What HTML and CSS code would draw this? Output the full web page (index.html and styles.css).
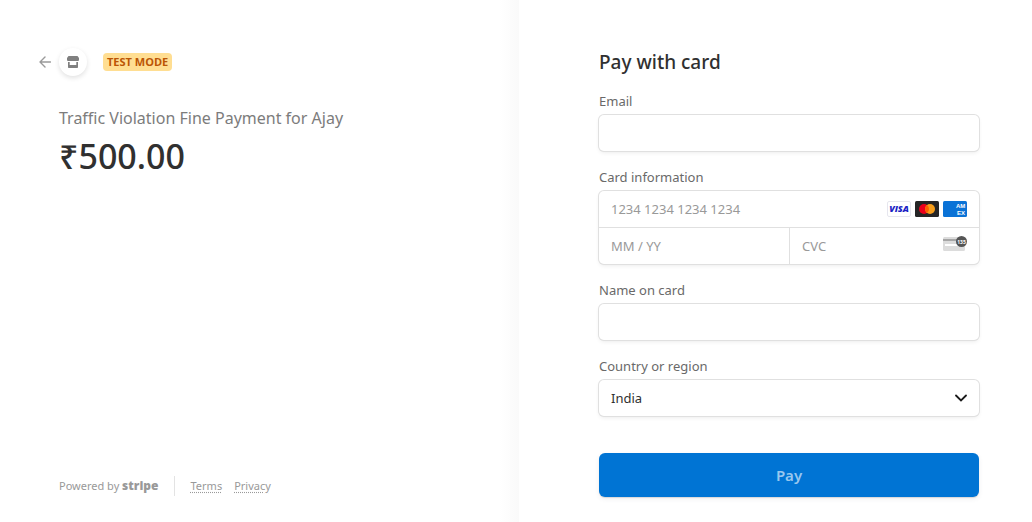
FILE: index.html
```html
<!DOCTYPE html>
<html lang="en">
<head>
<meta charset="utf-8">
<meta name="viewport" content="width=device-width, initial-scale=1">
<title>Checkout</title>
<link rel="stylesheet" href="styles.css">
</head>
<body>
<div class="checkout">
  <section class="overview">
    <header class="business">
      <a class="back" href="#" aria-label="Back">
        <svg class="back-arrow" viewBox="0 0 12 12" width="12" height="12"><path d="M11.5 6H1M6 1 1 6l5 5" fill="none" stroke="#9a9a9a" stroke-width="1.4" stroke-linecap="round" stroke-linejoin="round"/></svg>
        <span class="avatar">
          <svg viewBox="0 0 12 12" width="12" height="12" fill="#808080"><path d="M1.500 0h9L12 2v2c0 .6-.7 1-1.500 1H1.500C.7 5 0 4.600 0 4V2z"/><path d="M1 6h1.700v3h6.600V6H11v5c0 .6-.4 1-1 1H2c-.6 0-1-.4-1-1z"/></svg>
        </span>
      </a>
      <span class="badge">TEST MODE</span>
    </header>
    <div class="summary">
      <h1 class="product">Traffic Violation Fine Payment for Ajay</h1>
      <p class="amount">₹500.00</p>
    </div>
    <footer class="footer">
      <a class="powered" href="#">Powered by <b class="brand">stripe</b></a>
      <nav class="legal"><a href="#">Terms</a><a href="#">Privacy</a></nav>
    </footer>
  </section>
  <main class="payment">
    <form class="form">
      <h2 class="heading">Pay with card</h2>
      <div class="field">
        <label for="email">Email</label>
        <input class="box control" id="email" type="email">
      </div>
      <div class="field">
        <label for="number">Card information</label>
        <div class="box card">
          <div class="cell number">
            <input class="control" id="number" type="text" placeholder="1234 1234 1234 1234">
            <div class="brands">
              <svg viewBox="0 0 24 16" width="24" height="16" role="img" aria-label="Visa"><rect x=".5" y=".5" width="23" height="15" rx="1.500" fill="#fff" stroke="#e6e6ee"/><text class="visa" x="12" y="11" text-anchor="middle">VISA</text></svg>
              <svg viewBox="0 0 24 16" width="24" height="16" role="img" aria-label="Mastercard"><rect width="24" height="16" rx="1.500" fill="#252525"/><circle cx="9" cy="8" r="5" fill="#eb001b"/><circle cx="15" cy="8" r="5" fill="#f79e1b"/><path d="M12 4a5 5 0 0 1 0 8 5 5 0 0 1 0-8z" fill="#ff5f00"/></svg>
              <svg viewBox="0 0 24 16" width="24" height="16" role="img" aria-label="American Express"><rect width="24" height="16" rx="1.500" fill="#0a72d6"/><text class="amex" x="13" y="7">AM</text><text class="amex" x="14" y="14">EX</text></svg>
            </div>
          </div>
          <div class="cell"><input class="control" type="text" placeholder="MM / YY" aria-label="Expiration"></div>
          <div class="cell cvc">
            <input class="control" type="text" placeholder="CVC" aria-label="CVC">
            <svg viewBox="0 0 24 16" width="24" height="16" aria-hidden="true"><rect y="1" width="22" height="14" rx="1.500" fill="#dcdcdc"/><path d="M0 3h22v2H0z" fill="#a6a6a6"/><path d="M2 8h18v2H2z" fill="#fff"/><circle cx="18.500" cy="5.500" r="5.500" fill="#555"/><text class="digits" x="18.500" y="7.500" text-anchor="middle">135</text></svg>
          </div>
        </div>
      </div>
      <div class="field">
        <label for="name">Name on card</label>
        <input class="box control" id="name" type="text">
      </div>
      <div class="field">
        <label for="country">Country or region</label>
        <div class="box select">
          <select class="control" id="country"><option>India</option></select>
          <svg class="chevron" viewBox="0 0 12 12" width="12" height="12" aria-hidden="true"><path d="m1 3.500 5 5 5-5" fill="none" stroke="#1a1a1a" stroke-width="1.800" stroke-linecap="round"/></svg>
        </div>
      </div>
      <button class="pay" type="submit">Pay</button>
    </form>
  </main>
</div>
</body>
</html>
```
FILE: styles.css
```css
* { box-sizing: border-box; }
body { margin: 0; background: #fff; font-family: "Noto Sans", sans-serif; font-size: 13px; color: #303030; }
.checkout { display: grid; grid-template-columns: 519fr 513fr; min-height: 100vh; }
.overview { display: flex; flex-direction: column; padding: 48px 80px 26px 39px; background: linear-gradient(to left, #fafafa, #fff 20px); }
.business { display: flex; align-items: center; gap: 16px; }
.back { display: flex; align-items: center; gap: 8px; }
.avatar { display: grid; place-items: center; width: 28px; height: 28px; border-radius: 50%; background: #fff; box-shadow: 0 2px 5px rgba(0, 0, 0, .12); }
.badge { padding: 0 4px; border-radius: 4px; background: #ffde92; color: #bb5504; font: 700 11px/18px "Open Sans", sans-serif; }
.summary { padding: 30px 0 0 20px; }
.product { margin: 0; font-size: 16px; font-weight: 400; line-height: 24px; color: #7c7c7c; }
.amount { margin: 0; font-size: 34px; font-weight: 500; line-height: 52px; color: #303030; }
.footer { display: flex; align-items: center; margin-top: auto; padding-left: 20px; font-size: 11px; line-height: 20px; }
.footer a { color: #999; font-weight: 400; text-decoration: none; }
.brand { font: 800 12px/20px "Open Sans", sans-serif; }
.legal { display: flex; gap: 12px; margin-left: 15px; padding-left: 16px; border-left: 1px solid #e3e3e3; }
.footer .legal a { text-decoration: underline dotted; text-underline-offset: 2px; }
.payment { padding: 48px 53px 24px 80px; }
.form { display: flex; flex-direction: column; gap: 16px; }
.heading { margin: 0 0 -1px; font-size: 19px; font-weight: 500; line-height: 28px; }
.field { display: flex; flex-direction: column; gap: 4px; }
.field label { color: #696969; font-size: 13px; font-weight: 400; line-height: 20px; }
.box { border-radius: 5px; background: #fff; box-shadow: 0 0 0 1px #e0e0e0, 0 2px 4px rgba(0, 0, 0, .07), 0 1px 1px rgba(0, 0, 0, .05); }
.control { width: 100%; min-width: 0; height: 36px; padding: 0 12px; border: 0; background: transparent; font: 400 13px "Noto Sans", sans-serif; color: #303030; }
.box.control { background: #fff; }
.control::placeholder { color: #999; opacity: 1; }
.card { display: grid; grid-template-columns: 1fr 1fr; }
.cell { display: flex; align-items: center; }
.number { grid-column: 1 / -1; border-bottom: 1px solid #e0e0e0; }
.brands { display: flex; gap: 4px; margin-right: 12px; }
.cvc { border-left: 1px solid #e0e0e0; padding-right: 12px; }
.brands svg, .cvc svg { display: block; flex: none; }
.cvc svg { margin-bottom: 4px; }
.visa { font: italic 800 9px "Open Sans", sans-serif; fill: #1a1fc4; }
.amex { font: 700 6px "Liberation Sans", sans-serif; fill: #fff; }
.digits { font: 700 5px "Open Sans", sans-serif; fill: #fff; }
.select { display: grid; align-items: center; }
.select > * { grid-area: 1 / 1; }
.select select { appearance: none; }
.chevron { justify-self: end; margin-right: 12px; pointer-events: none; }
.pay { height: 44px; margin-top: 21px; border: 0; border-radius: 6px; background: #0074d4; color: #99c7ee; font: 600 15px "Noto Sans", sans-serif; box-shadow: 0 1px 1px rgba(0, 0, 0, .12), 0 2px 5px rgba(60, 66, 87, .08); }
```
